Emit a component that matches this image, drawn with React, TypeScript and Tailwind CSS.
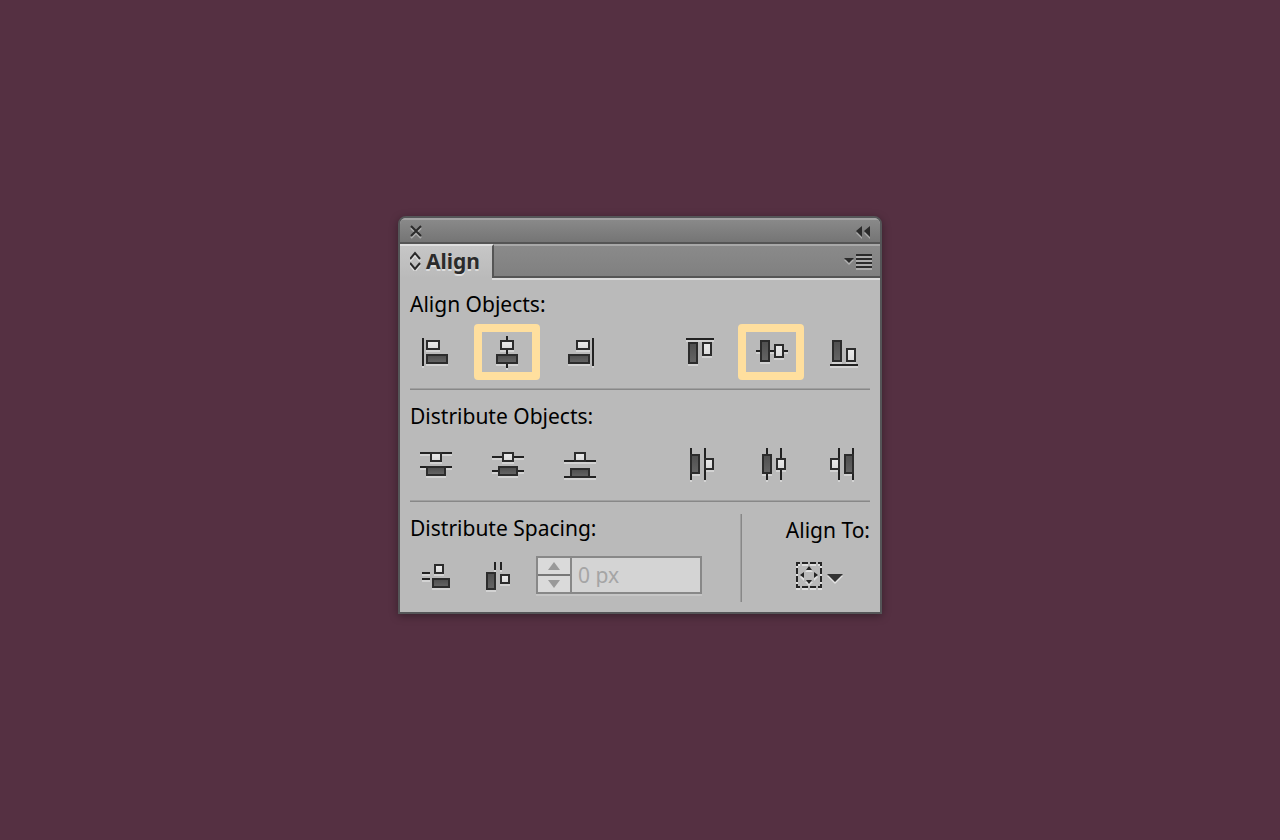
import { useId, type ReactNode } from "react";

type Kind = "line" | "light" | "dark";
type Shape = [kind: Kind, x: number, y: number, w: number, h: number];

type Tool = { label: string; shapes: Shape[]; selected?: boolean };

const alignHorizontal: Tool[] = [
  { label: "Horizontal Align Left", shapes: [["line", 12, 6, 2, 28], ["light", 16, 8, 14, 10], ["dark", 16, 22, 22, 10]] },
  { label: "Horizontal Align Center", selected: true, shapes: [["line", 24, 4, 2, 32], ["light", 18, 8, 14, 10], ["dark", 14, 22, 22, 10]] },
  { label: "Horizontal Align Right", shapes: [["line", 38, 6, 2, 28], ["light", 22, 8, 14, 10], ["dark", 14, 22, 22, 10]] },
];

const alignVertical: Tool[] = [
  { label: "Vertical Align Top", shapes: [["line", 12, 6, 28, 2], ["dark", 14, 10, 10, 22], ["light", 28, 10, 10, 14]] },
  { label: "Vertical Align Center", selected: true, shapes: [["line", 10, 18, 32, 2], ["dark", 14, 8, 10, 22], ["light", 28, 12, 10, 14]] },
  { label: "Vertical Align Bottom", shapes: [["line", 12, 32, 28, 2], ["dark", 14, 8, 10, 22], ["light", 28, 16, 10, 14]] },
];

const distributeVertical: Tool[] = [
  { label: "Vertical Distribute Top", shapes: [["line", 10, 8, 32, 2], ["line", 10, 22, 32, 2], ["light", 20, 8, 12, 10], ["dark", 16, 22, 20, 10]] },
  { label: "Vertical Distribute Center", shapes: [["line", 10, 12, 32, 2], ["line", 10, 26, 32, 2], ["light", 20, 8, 12, 10], ["dark", 16, 22, 20, 10]] },
  { label: "Vertical Distribute Bottom", shapes: [["line", 10, 16, 32, 2], ["line", 10, 32, 32, 2], ["light", 20, 8, 12, 10], ["dark", 16, 24, 20, 10]] },
];

const distributeHorizontal: Tool[] = [
  { label: "Horizontal Distribute Left", shapes: [["line", 16, 4, 2, 32], ["line", 30, 4, 2, 32], ["dark", 16, 10, 10, 20], ["light", 30, 14, 10, 12]] },
  { label: "Horizontal Distribute Center", shapes: [["line", 20, 4, 2, 32], ["line", 34, 4, 2, 32], ["dark", 16, 10, 10, 20], ["light", 30, 14, 10, 12]] },
  { label: "Horizontal Distribute Right", shapes: [["line", 20, 4, 2, 32], ["line", 34, 4, 2, 32], ["light", 12, 14, 10, 12], ["dark", 26, 10, 10, 20]] },
];

const verticalSpace: Shape[] = [["line", 0, 10, 8, 2], ["line", 0, 16, 8, 2], ["light", 12, 2, 10, 10], ["dark", 10, 16, 18, 10]];
const horizontalSpace: Shape[] = [["line", 8, 0, 2, 8], ["line", 14, 0, 2, 8], ["dark", 0, 10, 10, 18], ["light", 14, 12, 10, 10]];

function Glyph({ shapes, width, height }: { shapes: Shape[]; width: number; height: number }) {
  const id = useId();
  return (
    <svg width={width} height={height} viewBox={`0 0 ${width} ${height}`} shapeRendering="crispEdges" aria-hidden="true" className="block">
      <defs>
        <linearGradient id={`${id}l`} x1="0" y1="0" x2="0" y2="1">
          <stop offset="0" stopColor="#e9e9e9" />
          <stop offset="1" stopColor="#dcdcdc" />
        </linearGradient>
        <linearGradient id={`${id}d`} x1="0" y1="0" x2="0" y2="1">
          <stop offset="0" stopColor="#505050" />
          <stop offset="1" stopColor="#636363" />
        </linearGradient>
      </defs>
      {shapes.map(([, x, y, w, h], i) => (
        <rect key={i} x={x} y={y + 2} width={w} height={h} fill="#d3d3d3" />
      ))}
      {shapes.map(([kind, x, y, w, h], i) => (
        <g key={i}>
          <rect x={x} y={y} width={w} height={h} fill={kind === "line" ? "#222222" : "#2c2c2c"} />
          {kind !== "line" && (
            <rect x={x + 2} y={y + 2} width={w - 4} height={h - 4} fill={`url(#${id}${kind === "light" ? "l" : "d"})`} />
          )}
        </g>
      ))}
    </svg>
  );
}

function ToolGroup({ tools }: { tools: Tool[] }) {
  return (
    <div className="flex gap-1.5">
      {tools.map((t) => (
        <button
          key={t.label}
          type="button"
          aria-label={t.label}
          aria-pressed={!!t.selected}
          className={`rounded border-8 ${t.selected ? "border-[#ffdf9e]" : "border-transparent"}`}
        >
          <Glyph shapes={t.shapes} width={50} height={40} />
        </button>
      ))}
    </div>
  );
}

function Section({ title, children }: { title: string; children: ReactNode }) {
  return (
    <section className="pt-3.5 first:pt-3">
      <h2 className="px-2.5 text-[21px] leading-6">{title}</h2>
      <div className="mt-2 flex justify-between pr-1 pl-0.5">{children}</div>
      <hr className="mx-2.5 mt-2 h-0.5 border-0 border-t border-b border-t-[#a0a0a0] border-b-[#888888]" />
    </section>
  );
}

export default function App() {
  return (
    <main className="flex min-h-screen items-center justify-center bg-[#553042] pb-2.5 font-['Noto_Sans',sans-serif] text-black">
      <div className="w-full max-w-[484px] overflow-hidden rounded-t-lg border-2 border-[#555658] bg-[#bababa] shadow-[0_2px_8px_rgba(0,0,0,0.35)]">
        <header className="flex h-6 items-center justify-between border-t-2 border-[#a3a3a3] bg-linear-to-b from-[#898989] to-[#757575] pt-0.5 pr-2 pl-2.5">
          <button type="button" aria-label="Close">
            <svg width="12" height="14" viewBox="0 0 12 14" fill="none" strokeWidth="2" className="block">
              <path d="M1 3l10 10M11 3L1 13" stroke="#acacac" />
              <path d="M1 1l10 10M11 1L1 11" stroke="#2b2b2b" />
            </svg>
          </button>
          <button type="button" aria-label="Collapse panel">
            <svg width="16" height="14" viewBox="0 0 16 14" className="block">
              <path d="M6 3v11L0 8zM14 3v11L8 8z" fill="#aaaaaa" />
              <path d="M6 1v11L0 6zM14 1v11L8 6z" fill="#2b2b2b" />
            </svg>
          </button>
        </header>
        <div className="flex h-9 border-t-2 border-[#555555] bg-[#858585]">
          <div className="flex w-[94px] items-center gap-1 border-t-2 border-r-2 border-t-[#dedede] border-r-[#555555] bg-linear-to-b from-[#c6c6c6] to-[#bababa] pb-0.5 pl-2.5">
            <svg width="12" height="20" viewBox="0 0 12 20" fill="none" strokeWidth="2" aria-hidden="true">
              <path d="M0 10l5-6 5 6M0 14l5 6 5-6" stroke="#dedede" />
              <path d="M0 8l5-6 5 6M0 12l5 6 5-6" stroke="#2b2b2b" />
            </svg>
            <h1 className="text-[21px] leading-6 font-bold text-[#2b2b2b] [text-shadow:0_2px_0_#dedede]">Align</h1>
          </div>
          <div className="flex grow items-center justify-end border-t-2 border-b-2 border-t-[#a8a8a8] border-b-[#555555] bg-linear-to-b from-[#8a8a8a] to-[#808080] pt-0.5 pr-2">
            <button type="button" aria-label="Panel menu">
              <svg width="28" height="16" viewBox="0 0 28 16" className="block">
                <path d="M0 6h10l-5 5z" fill="#b0b0b0" />
                <path d="M0 4h10l-5 5z" fill="#2b2b2b" />
                <path d="M12 0h16v16h-16z" fill="#acacac" />
                <path d="M12 0h16v2h-16zM12 4h16v2h-16zM12 8h16v2h-16zM12 12h16v2h-16z" fill="#2b2b2b" />
              </svg>
            </button>
          </div>
        </div>
        <div className="flex">
          <div className="h-0.5 w-[92px]" />
          <div className="h-0.5 grow bg-[#dcdcdc]" />
        </div>

        <div>
          <Section title="Align Objects:">
            <ToolGroup tools={alignHorizontal} />
            <ToolGroup tools={alignVertical} />
          </Section>
          <Section title="Distribute Objects:">
            <ToolGroup tools={distributeVertical} />
            <ToolGroup tools={distributeHorizontal} />
          </Section>
        </div>

        <div className="flex pt-3 pr-2.5 pb-2.5 pl-2.5">
          <section className="grow pt-0.5">
            <h2 className="text-[21px] leading-6">Distribute Spacing:</h2>
            <div className="mt-4 flex items-end">
              <button type="button" aria-label="Vertical Distribute Space" className="ml-3">
                <Glyph shapes={verticalSpace} width={28} height={32} />
              </button>
              <button type="button" aria-label="Horizontal Distribute Space" className="ml-9">
                <Glyph shapes={horizontalSpace} width={24} height={32} />
              </button>
              <div className="ml-[26px] flex h-[38px] border-2 border-[#888888] bg-[#d4d4d4] shadow-[0_2px_0_#c6c6c6]">
                <div className="flex w-[34px] flex-col border-r-2 border-[#888888]">
                  <button type="button" disabled aria-label="Increase spacing" className="flex h-4 items-center justify-center bg-[#dadada]">
                    <svg width="12" height="8" viewBox="0 0 12 8"><path d="M6 0l6 8H0z" fill="#999999" /></svg>
                  </button>
                  <button type="button" disabled aria-label="Decrease spacing" className="flex h-[18px] items-center justify-center border-t-2 border-[#777777] bg-[#dadada]">
                    <svg width="12" height="8" viewBox="0 0 12 8"><path d="M0 0h12L6 8z" fill="#999999" /></svg>
                  </button>
                </div>
                <input
                  type="text"
                  disabled
                  aria-label="Spacing value"
                  defaultValue="0 px"
                  className="w-32 bg-transparent pl-1.5 text-[21px] leading-6 text-[#a5a5a5]"
                />
              </div>
            </div>
          </section>
          <div className="h-[88px] w-0.5 border-r border-l border-l-[#a0a0a0] border-r-[#888888]" />
          <section className="flex w-32 flex-col items-end pt-1">
            <h2 className="text-[21px] leading-6">Align To:</h2>
            <button type="button" aria-label="Align To" aria-haspopup="menu" className="mt-5 mr-[26px] flex">
              <svg width="48" height="30" viewBox="0 0 48 30" className="block">
                <rect x="1" y="3" width="24" height="24" fill="none" stroke="#dedede" strokeWidth="2" strokeDasharray="6 2" strokeDashoffset="3" />
                <rect x="1" y="1" width="24" height="24" fill="none" stroke="#252525" strokeWidth="2" strokeDasharray="6 2" strokeDashoffset="3" />
                <path d="M13 6l4 4H9zM13 24l4-4H9zM4 15l4-4v8zM22 15l-4-4v8z" fill="#dedede" />
                <path d="M13 4l3 4h-6zM13 22l3-4h-6zM4 13l4-3v6zM22 13l-4-3v6z" fill="#252525" />
                <path d="M31 14h16l-8 8z" fill="#e2e2e2" />
                <path d="M31 12h16l-8 8z" fill="#333333" />
              </svg>
            </button>
          </section>
        </div>
      </div>
    </main>
  );
}
